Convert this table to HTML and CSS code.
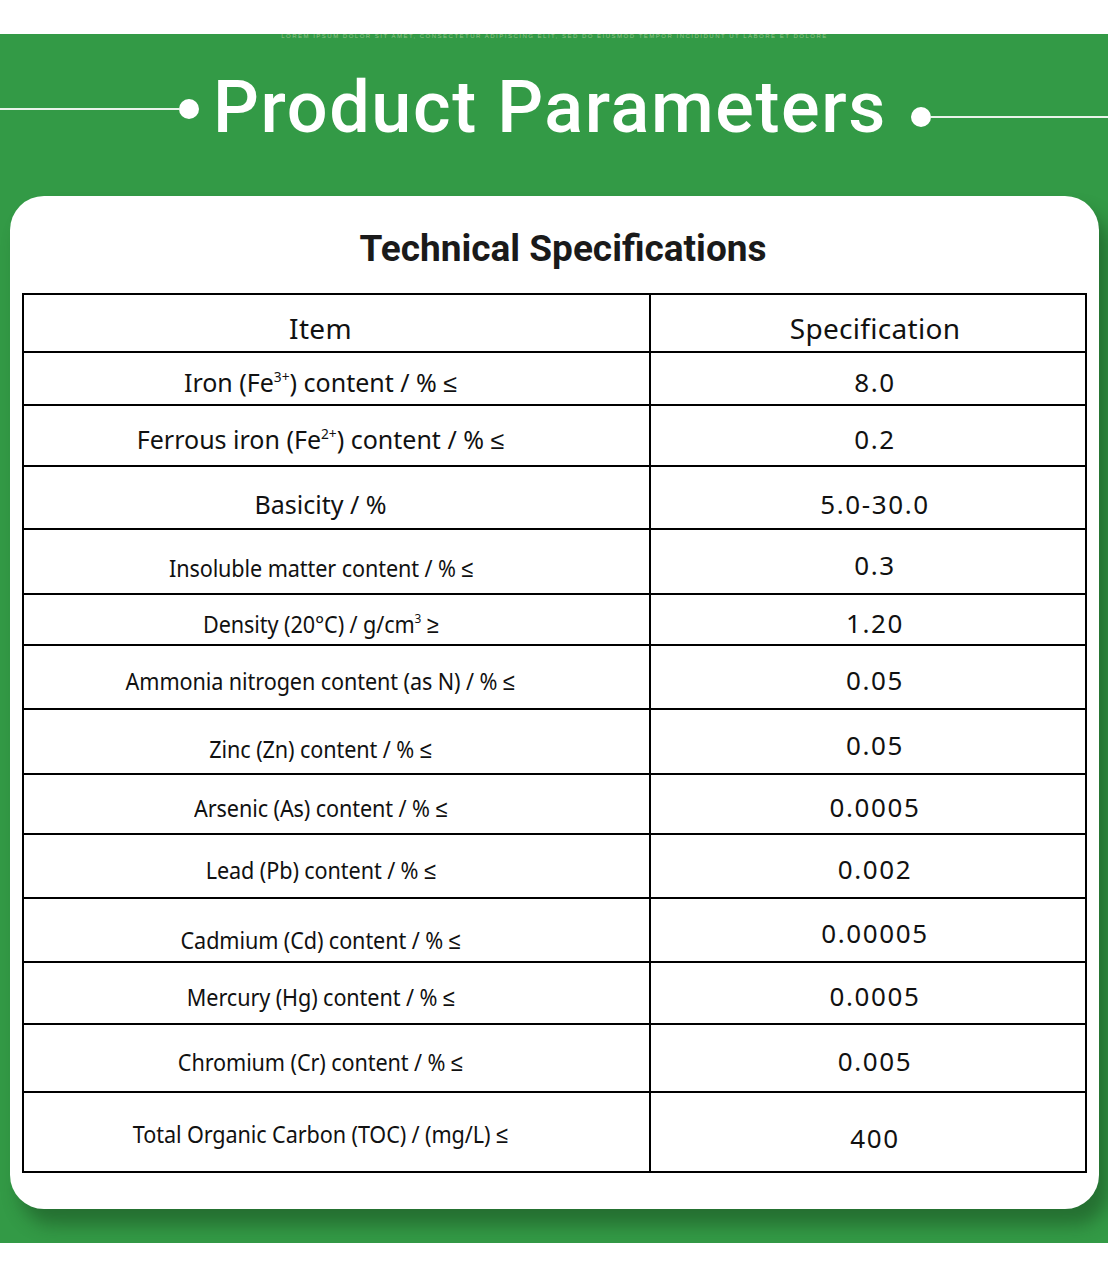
FILE: index.html
```html
<!DOCTYPE html>
<html lang="en">
<head>
<meta charset="utf-8">
<title>Product Parameters</title>
<link rel="stylesheet" href="styles.css">
</head>
<body>
<div class="top-gap"></div>
<section class="band">
  <div class="strip">LOREM IPSUM DOLOR SIT AMET, CONSECTETUR ADIPISCING ELIT, SED DO EIUSMOD TEMPOR INCIDIDUNT UT LABORE ET DOLORE</div>
  <div class="title-row">
    <div class="deco deco-left"><span class="line"></span><span class="dot"></span></div>
    <h1 class="title">Product Parameters</h1>
    <div class="deco deco-right"><span class="dot"></span><span class="line"></span></div>
  </div>
  <div class="card">
    <h2 class="subtitle">Technical Specifications</h2>
    <table class="spec">
      <colgroup><col class="c1"><col class="c2"></colgroup>
      <tr class="head"><th class="item">Item</th><th class="val">Specification</th></tr>
      <tr><td class="item">Iron (Fe<sup>3+</sup>) content / % ≤</td><td class="val">8.0</td></tr>
      <tr><td class="item">Ferrous iron (Fe<sup>2+</sup>) content / % ≤</td><td class="val">0.2</td></tr>
      <tr><td class="item">Basicity / %</td><td class="val">5.0-30.0</td></tr>
      <tr><td class="item"><span class="narrow">Insoluble matter content / % ≤</span></td><td class="val">0.3</td></tr>
      <tr><td class="item"><span class="narrow">Density (20°C) / g/cm<sup>3</sup> ≥</span></td><td class="val">1.20</td></tr>
      <tr><td class="item"><span class="narrow">Ammonia nitrogen content (as N) / % ≤</span></td><td class="val">0.05</td></tr>
      <tr><td class="item"><span class="narrow">Zinc (Zn) content / % ≤</span></td><td class="val">0.05</td></tr>
      <tr><td class="item"><span class="narrow">Arsenic (As) content / % ≤</span></td><td class="val">0.0005</td></tr>
      <tr><td class="item"><span class="narrow">Lead (Pb) content / % ≤</span></td><td class="val">0.002</td></tr>
      <tr><td class="item"><span class="narrow">Cadmium (Cd) content / % ≤</span></td><td class="val">0.00005</td></tr>
      <tr><td class="item"><span class="narrow">Mercury (Hg) content / % ≤</span></td><td class="val">0.0005</td></tr>
      <tr><td class="item"><span class="narrow">Chromium (Cr) content / % ≤</span></td><td class="val">0.005</td></tr>
      <tr><td class="item"><span class="narrow">Total Organic Carbon (TOC) / (mg/L) ≤</span></td><td class="val">400</td></tr>
    </table>
  </div>
</section>
</body>
</html>
```

FILE: styles.css
```css
* { box-sizing: border-box; }
html, body { margin: 0; padding: 0; background: #ffffff; }
body { width: 1108px; font-family: "Noto Sans", "Liberation Sans", sans-serif; color: #111; }

.top-gap { height: 34px; background: #fff; }

.band {
  background: #339a46;
  padding: 0 9px 34px 10px;
}

.strip {
  height: 5px;
  font-family: "Liberation Sans", sans-serif;
  font-size: 6px;
  line-height: 5px;
  text-align: center;
  color: #92c287;
  letter-spacing: 1.5px;
  white-space: nowrap;
}

.title-row {
  display: flex;
  align-items: flex-start;
  height: 157px;
  margin: 0 -9px 0 -10px;
}

.deco { display: flex; align-items: center; }
.deco .line { display: block; height: 2px; background: #e9f3ea; flex: 1; }
.deco .dot { display: block; width: 20px; height: 20px; border-radius: 50%; background: #fff; flex: none; }
.deco-left { width: 199px; flex: none; margin-top: 60px; }
.deco-right { flex: 1; margin-top: 68px; margin-left: 24px; }

.title {
  margin: 27px 0 0 14px;
  font-family: "Roboto", "Liberation Sans", sans-serif;
  font-weight: 500;
  font-size: 72px;
  line-height: 84px;
  letter-spacing: 1.6px;
  color: #fff;
  white-space: nowrap;
}

.card {
  background: #fff;
  border-radius: 34px;
  padding: 0 12px 36px 12px;
  box-shadow: 10px 16px 18px rgba(20, 60, 25, 0.45);
}

.subtitle {
  margin: 0;
  height: 97px;
  padding: 8px 0 0 17px;
  display: flex;
  align-items: center;
  justify-content: center;
  font-family: "Roboto", "Liberation Sans", sans-serif;
  font-weight: 700;
  font-size: 37px;
  color: #1a1a1a;
}

.spec {
  width: 1065px;
  border-collapse: collapse;
  border: 2px solid #000;
  table-layout: fixed;
}
.spec col.c1 { width: 627px; }
.spec th, .spec td {
  border: 2px solid #000;
  padding: 6px 0 0 0;
  text-align: center;
  vertical-align: middle;
  font-weight: 400;
  white-space: nowrap;
}
.spec .item { padding-right: 32px; font-size: 25px; }
.spec .val { padding-left: 14px; font-size: 26px; letter-spacing: 1.6px; }
.spec th.item, .spec th.val { font-size: 28px; letter-spacing: 0.3px; padding-top: 10px; }

.spec sup { font-size: 0.55em; line-height: 0; vertical-align: 0.75em; }

.narrow { display: inline-block; font-size: 24px; transform: scaleX(0.9); transform-origin: center; letter-spacing: -0.1px; }

.spec tr:nth-child(1) { height: 58px; }
.spec tr:nth-child(2) { height: 53px; }
.spec tr:nth-child(3) { height: 61px; }
.spec tr:nth-child(4) { height: 63px; }
.spec tr:nth-child(5) { height: 65px; }
.spec tr:nth-child(6) { height: 51px; }
.spec tr:nth-child(7) { height: 64px; }
.spec tr:nth-child(8) { height: 65px; }
.spec tr:nth-child(9) { height: 60px; }
.spec tr:nth-child(10) { height: 64px; }
.spec tr:nth-child(11) { height: 64px; }
.spec tr:nth-child(12) { height: 62px; }
.spec tr:nth-child(13) { height: 68px; }
.spec tr:nth-child(14) { height: 80px; }

.spec tr:nth-child(4) td { padding-top: 12px; }
.spec tr:nth-child(5) td.item { padding-top: 10px; }
.spec tr:nth-child(8) td.item { padding-top: 12px; }
.spec tr:nth-child(11) td.item { padding-top: 18px; }
.spec tr:nth-child(14) td.item { padding-top: 2px; }
.spec tr:nth-child(14) td.val { padding-top: 12px; }
```
